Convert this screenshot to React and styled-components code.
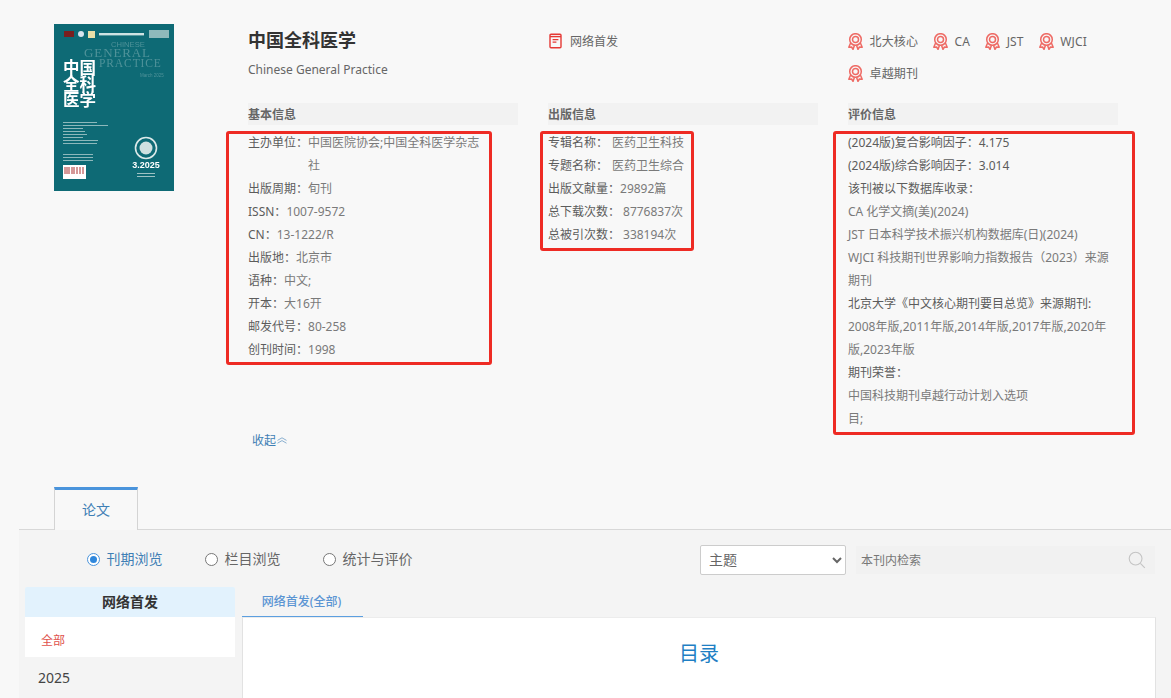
import React from "react";
import styled, { createGlobalStyle } from "styled-components";

const Global = createGlobalStyle`
  html, body { margin: 0; padding: 0; height: 698px; overflow: hidden; background: #f8f8f8; }
  body { font-family: "Noto Sans", "Noto Sans CJK SC", sans-serif; font-size: 12px; color: #666; }
  * { box-sizing: border-box; }
`;

const Top = styled.section`
  display: flex;
  padding: 25px 0 0 54px;
`;
const CoverWrap = styled.div`
  width: 120px;
  height: 167px;
  flex: none;
  margin: -1px 74px 0 0;
  svg { display: block; filter: blur(0.35px); }
`;
const Details = styled.div`
  flex: 1;
`;
const Grid = styled.div`
  display: grid;
  grid-template-columns: repeat(3, 270px);
  column-gap: 30px;
`;
const Column = styled.div`
  display: flex;
  flex-direction: column;
`;
const Head = styled.div`
  height: 78px;
`;
const Title = styled.h1`
  margin: 3px 0 0;
  font-size: 18px;
  line-height: 24px;
  font-weight: 700;
  color: #333;
`;
const Subtitle = styled.p`
  margin: 9px 0 0;
  font-size: 12px;
  line-height: 18px;
  color: #666;
`;
const First = styled.div`
  display: flex;
  align-items: center;
  gap: 8px;
  height: 16px;
  margin: 8px 0 0 1px;
  color: #666;
`;
const Badges = styled.div`
  display: flex;
  flex-wrap: wrap;
  column-gap: 15px;
  row-gap: 14px;
  padding-top: 7px;
`;
const Badge = styled.span`
  display: inline-flex;
  align-items: center;
  gap: 6.5px;
  height: 18px;
  color: #666;
  letter-spacing: 0.15px;
`;
const SectionTitle = styled.div`
  height: 22px;
  line-height: 24px;
  background: #f2f2f2;
  font-weight: 700;
  color: #666;
  margin-bottom: 6px;
`;
const List = styled.div`
  position: relative;
  line-height: 23px;
  color: #7a7a7a;
  max-width: ${(p) => p.$width}px;
  &::after {
    content: "";
    position: absolute;
    top: 0;
    left: ${(p) => p.$left}px;
    right: ${(p) => p.$right}px;
    bottom: ${(p) => p.$bottom}px;
    border: 3px solid #ee2b24;
    border-radius: 3px;
    pointer-events: none;
  }
`;
const Row = styled.div`
  display: flex;
`;
const Label = styled.span`
  flex: none;
  color: #5c5c5c;
  margin-right: ${(p) => p.$gap || 0}px;
`;
const Value = styled.span`
  color: #7a7a7a;
`;
const Line = styled.div`
  color: ${(p) => (p.$dark ? "#5c5c5c" : "#7a7a7a")};
  max-width: ${(p) => p.$max || 270}px;
`;
const Collapse = styled.a`
  display: flex;
  align-items: center;
  gap: 1px;
  height: 20px;
  margin: 0 0 0 4px;
  color: #3f7fb5;
`;
const TabBar = styled.div`
  display: flex;
  height: 43px;
  margin: 37px 0 0 19px;
  padding-left: 35px;
  border-bottom: 1px solid #d8d8d8;
`;
const Tab = styled.div`
  width: 84px;
  height: 43px;
  border: 1px solid #d4d4d4;
  border-top: 3px solid #4a94dc;
  border-bottom: none;
  background: #f8f8f8;
  text-align: center;
  line-height: 40px;
  font-size: 14px;
  color: #3f7fb5;
`;
const Lower = styled.section`
  margin-left: 19px;
  height: 168px;
  background: #f4f4f4;
  overflow: hidden;
`;
const Toolbar = styled.div`
  display: flex;
  align-items: center;
  height: 57px;
  padding: 0 16px 0 68px;
`;
const RadioGroup = styled.div`
  display: flex;
  flex: 1;
`;
const RadioItem = styled.label`
  display: flex;
  align-items: center;
  gap: 6.5px;
  margin: -1px ${(p) => p.$gap}px 0 0;
  font-size: 14px;
  color: ${(p) => (p.$on ? "#3f7fb5" : "#666")};
`;
const Radio = styled.span`
  position: relative;
  width: 13px;
  height: 13px;
  margin-top: 2px;
  border-radius: 50%;
  border: 1px solid ${(p) => (p.$on ? "#4a94dc" : "#777")};
  background: #fff;
  &::after {
    content: "";
    display: ${(p) => (p.$on ? "block" : "none")};
    position: absolute;
    inset: 2px;
    border-radius: 50%;
    background: #2f87dc;
  }
`;
const Select = styled.select`
  width: 146px;
  height: 30px;
  margin: 2px 10px 0 0;
  padding-left: 4px;
  background: #fff;
  border: 1px solid #ccc;
  border-radius: 2px;
  font: 14px "Noto Sans", "Noto Sans CJK SC", sans-serif;
  color: #666;
`;
const Search = styled.div`
  display: flex;
  align-items: center;
  justify-content: space-between;
  width: 299px;
  height: 28px;
  margin-top: 3px;
  padding: 0 9px 0 5px;
  background: #f1f1f1;
  color: #777;
`;
const Body = styled.div`
  display: flex;
  padding-left: 6px;
`;
const Side = styled.aside`
  width: 210px;
  flex: none;
`;
const SideHead = styled.div`
  height: 30px;
  line-height: 30px;
  text-align: center;
  background: #e2f2fd;
  font-size: 14px;
  font-weight: 700;
  color: #333;
  border-radius: 2px 2px 0 0;
`;
const SideAll = styled.div`
  height: 40px;
  line-height: 47px;
  padding-left: 16px;
  background: #fff;
  color: #e0524d;
`;
const Year = styled.div`
  padding: 11px 0 0 13px;
  font-size: 14px;
  line-height: 20px;
  color: #444;
`;
const Main = styled.div`
  width: 914px;
  margin-left: 7px;
  flex: none;
`;
const MainTab = styled.div`
  width: 121px;
  height: 30px;
  padding-right: 2px;
  line-height: 30px;
  text-align: center;
  font-weight: 500;
  color: #5b95d3;
  border-bottom: 1px solid #5b9fe0;
`;
const Panel = styled.div`
  height: 100px;
  padding-top: 21px;
  background: #fff;
  border: 1px solid #e2e2e2;
  border-top-color: #ececec;
  border-bottom: none;
  text-align: center;
  font-size: 20px;
  line-height: 30px;
  color: #1f7fc4;
`;

const Medal = () => (
  <svg width="15" height="17" viewBox="0 0 15 17" fill="none" stroke="#ee6a64" strokeWidth="1.5">
    <circle cx="7.5" cy="6.5" r="5.8" />
    <circle cx="7.5" cy="6.5" r="3" />
    <path d="M2.6 10 L0.8 14.2 L3.6 14 L5 16.4 L6.4 12.6 M12.4 10 L14.2 14.2 L11.4 14 L10 16.4 L8.6 12.6" strokeLinejoin="round" />
  </svg>
);

const BookIcon = () => (
  <svg width="13" height="16" viewBox="0 0 13 16" fill="none" stroke="#e53935" strokeWidth="1.4">
    <rect x="1" y="1.2" width="11" height="13.6" rx="1" />
    <path d="M1 3.6 H12" />
    <path d="M3.6 6.6 H9.4 M3.6 9.2 H7.4" strokeWidth="1.2" />
  </svg>
);

const Chevrons = () => (
  <svg width="10" height="7" viewBox="0 0 10 7" fill="none" stroke="#7fa8cc" strokeWidth="0.9">
    <path d="M0.5 3.4 L5 0.8 L9.5 3.4 M0.5 6.2 L5 3.6 L9.5 6.2" />
  </svg>
);

const SearchIcon = () => (
  <svg width="18" height="18" viewBox="0 0 18 18" fill="none" stroke="#c4c4c4" strokeWidth="1.1">
    <circle cx="7.6" cy="7.6" r="6.4" />
    <path d="M12.4 12.4 L16.8 16.8" />
  </svg>
);

const Cover = () => (
  <svg width="120" height="167" viewBox="0 0 120 167">
    <rect width="120" height="167" fill="#0e6a75" />
    <rect x="10" y="7" width="10" height="6" fill="#7a1f1f" />
    <circle cx="27" cy="10" r="3" fill="#d7e3ee" />
    <rect x="34" y="7" width="7" height="7" fill="#e9dfa8" />
    <rect x="45" y="9" width="45" height="2.4" fill="#cfe3e3" />
    <rect x="95" y="6" width="20" height="8" fill="#8fb9bb" />
    <text fontFamily="'Liberation Serif', serif" fill="#4f9299">
      <tspan x="57" y="22.5" fontSize="7.6" fontFamily="'Liberation Sans', sans-serif">CHINESE</tspan>
      <tspan x="30" y="33" fontSize="13" letterSpacing="0.9">GENERAL</tspan>
      <tspan x="45" y="43" fontSize="11.5" letterSpacing="0.9">PRACTICE</tspan>
      <tspan x="86" y="53" fontSize="4.5" fontFamily="'Liberation Sans', sans-serif">March 2025</tspan>
    </text>
    <text fontFamily="'Noto Sans CJK SC', sans-serif" fontWeight="700" fontSize="16.5" fill="#fff">
      <tspan x="9" y="50">中国</tspan>
      <tspan x="9" y="66">全科</tspan>
      <tspan x="9" y="82">医学</tspan>
    </text>
    <g fill="#8db8bb">
      {[98, 101, 104, 107, 110, 113, 116, 119].map((y, i) => (
        <rect key={y} x="9" y={y} width={[34, 45, 20, 22, 24, 20, 35, 34][i]} height="1" />
      ))}
      {[130, 133, 136].map((y) => (
        <rect key={y} x="9" y={y} width="30" height="1" />
      ))}
    </g>
    <rect x="9" y="141" width="23" height="14" fill="#fff" />
    <path d="M11 143v7M13 143v7M15 143v7M18 143v7M20 143v7M23 143v7M26 143v7M29 143v7" stroke="#a33" strokeWidth="1" />
    <circle cx="92" cy="124" r="10.5" fill="none" stroke="#dbe9e9" strokeWidth="1.6" />
    <circle cx="92" cy="124" r="6.5" fill="#cfe0e0" />
    <text x="92" y="144" fontSize="9" fontWeight="700" fill="#fff" textAnchor="middle" fontFamily="'Liberation Sans', sans-serif">3.2025</text>
    <rect x="83" y="149" width="18" height="1" fill="#9dc2c4" />
    <rect x="83" y="152" width="18" height="1" fill="#9dc2c4" />
  </svg>
);

export default function App() {
  return (
    <>
      <Global />
      <Top>
        <CoverWrap>
          <Cover />
        </CoverWrap>
        <Details>
          <Grid>
            <Column>
              <Head>
                <Title>中国全科医学</Title>
                <Subtitle>Chinese General Practice</Subtitle>
              </Head>
              <SectionTitle>基本信息</SectionTitle>
              <List $width={237} $left={-22} $right={-7} $bottom={-4}>
                <Row><Label>主办单位：</Label><Value>中国医院协会;中国全科医学杂志社</Value></Row>
                <Row><Label>出版周期：</Label><Value>旬刊</Value></Row>
                <Row><Label>ISSN：</Label><Value>1007-9572</Value></Row>
                <Row><Label>CN：</Label><Value>13-1222/R</Value></Row>
                <Row><Label>出版地：</Label><Value>北京市</Value></Row>
                <Row><Label>语种：</Label><Value>中文;</Value></Row>
                <Row><Label>开本：</Label><Value>大16开</Value></Row>
                <Row><Label>邮发代号：</Label><Value>80-258</Value></Row>
                <Row><Label>创刊时间：</Label><Value>1998</Value></Row>
              </List>
            </Column>
            <Column>
              <Head>
                <First><BookIcon /><span>网络首发</span></First>
              </Head>
              <SectionTitle>出版信息</SectionTitle>
              <List $width={140} $left={-8} $right={-6} $bottom={-5}>
                <Row><Label $gap={4}>专辑名称：</Label><Value>医药卫生科技</Value></Row>
                <Row><Label $gap={4}>专题名称：</Label><Value>医药卫生综合</Value></Row>
                <Row><Label>出版文献量：</Label><Value>29892篇</Value></Row>
                <Row><Label $gap={3}>总下载次数：</Label><Value>8776837次</Value></Row>
                <Row><Label $gap={3}>总被引次数：</Label><Value>338194次</Value></Row>
              </List>
            </Column>
            <Column>
              <Head>
                <Badges>
                  <Badge><Medal />北大核心</Badge>
                  <Badge><Medal />CA</Badge>
                  <Badge><Medal />JST</Badge>
                  <Badge><Medal />WJCI</Badge>
                  <Badge><Medal />卓越期刊</Badge>
                </Badges>
              </Head>
              <SectionTitle>评价信息</SectionTitle>
              <List $width={270} $left={-15} $right={-17} $bottom={-5}>
                <Line $dark>(2024版)复合影响因子：4.175</Line>
                <Line $dark>(2024版)综合影响因子：3.014</Line>
                <Line $dark>该刊被以下数据库收录：</Line>
                <Line>CA 化学文摘(美)(2024)</Line>
                <Line>JST 日本科学技术振兴机构数据库(日)(2024)</Line>
                <Line>WJCI 科技期刊世界影响力指数报告（2023）来源期刊</Line>
                <Line $dark>北京大学《中文核心期刊要目总览》来源期刊:</Line>
                <Line>2008年版,2011年版,2014年版,2017年版,2020年版,2023年版</Line>
                <Line $dark>期刊荣誉：</Line>
                <Line $max={185}>中国科技期刊卓越行动计划入选项目;</Line>
              </List>
            </Column>
          </Grid>
          <Collapse>收起<Chevrons /></Collapse>
        </Details>
      </Top>
      <TabBar>
        <Tab>论文</Tab>
      </TabBar>
      <Lower>
        <Toolbar>
          <RadioGroup>
            <RadioItem $on $gap={42.5}><Radio $on />刊期浏览</RadioItem>
            <RadioItem $gap={42.5}><Radio />栏目浏览</RadioItem>
            <RadioItem $gap={0}><Radio />统计与评价</RadioItem>
          </RadioGroup>
          <Select defaultValue="主题">
            <option>主题</option>
          </Select>
          <Search>本刊内检索<SearchIcon /></Search>
        </Toolbar>
        <Body>
          <Side>
            <SideHead>网络首发</SideHead>
            <SideAll>全部</SideAll>
            <Year>2025</Year>
          </Side>
          <Main>
            <MainTab>网络首发(全部)</MainTab>
            <Panel>目录</Panel>
          </Main>
        </Body>
      </Lower>
    </>
  );
}
